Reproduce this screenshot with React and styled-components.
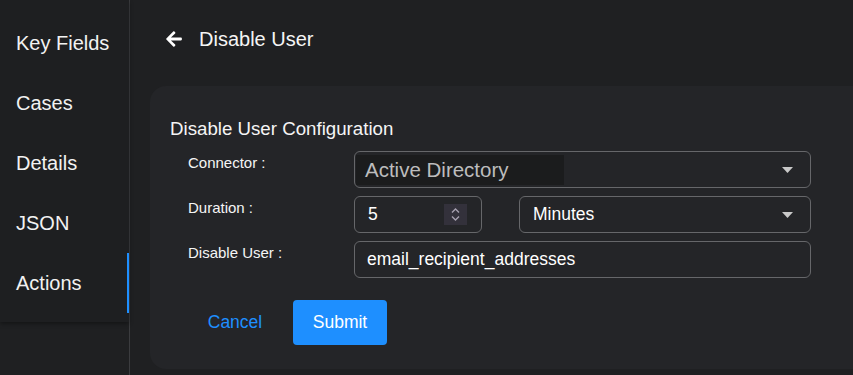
import React from 'react';
import styled, { createGlobalStyle } from 'styled-components';

const GlobalStyle = createGlobalStyle`
  body {
    margin: 0;
    background: #1f2022;
    font-family: "Liberation Sans", Arial, sans-serif;
    color: #ffffff;
  }
`;

const Page = styled.div`
  display: flex;
  height: 375px;
  overflow: hidden;
`;

const SideColumn = styled.aside`
  width: 129px;
  flex-shrink: 0;
  border-right: 1px solid #3b3c3f;
`;

const SidePanel = styled.nav`
  background: #1e1f21;
  padding: 13px 0 9px;
  box-shadow: 0 2px 4px rgba(0, 0, 0, 0.35);
`;

const NavItem = styled.div`
  height: 60px;
  display: flex;
  align-items: center;
  padding-left: 16px;
  font-size: 20px;
  color: #f2f2f2;
  box-shadow: ${(p) => (p.$active ? 'inset -2px 0 0 #1e8fff' : 'none')};
`;

const Main = styled.main`
  flex: 1;
  padding: 20px 0 6px 20px;
  display: flex;
  flex-direction: column;
  min-width: 0;
`;

const Header = styled.div`
  display: flex;
  align-items: center;
  height: 38px;
  padding-left: 16px;
  gap: 17px;
  font-size: 20px;
  color: #f5f5f5;
`;

const Card = styled.section`
  margin-top: 28px;
  margin-right: -30px;
  background: #242528;
  border-radius: 16px;
  padding: 32px 20px 24px;
`;

const CardTitle = styled.h2`
  margin: 0 0 11px;
  font-size: 18.7px;
  line-height: 22px;
  font-weight: 400;
  color: #f5f5f5;
`;

const Form = styled.div`
  display: grid;
  grid-template-columns: 184px 457px;
  row-gap: 8px;
`;

const Label = styled.div`
  padding: 3px 0 0 18px;
  font-size: 15px;
  line-height: 17px;
  color: #f5f5f5;
`;

const Field = styled.div`
  height: 37px;
  box-sizing: border-box;
  border: 1px solid #66676a;
  border-radius: 6px;
  display: flex;
  align-items: center;
  justify-content: ${(p) => (p.$spread ? 'space-between' : 'flex-start')};
  padding: ${(p) => p.$pad || '0 16px 0 12px'};
  font-size: 17.5px;
  color: #ffffff;
  width: ${(p) => p.$width || 'auto'};
`;

const Split = styled.div`
  display: flex;
  gap: 37px;
`;

const Grow = styled.div`
  flex: 1;
`;

const AutoBox = styled.div`
  height: 30px;
  width: 208px;
  background: #1b1c1d;
  display: flex;
  align-items: center;
  padding-left: 9px;
  box-sizing: border-box;
  font-size: 20.5px;
  color: #bdbdbd;
`;

const Spinner = styled.div`
  width: 23px;
  height: 21px;
  background: #33313b;
  display: flex;
  align-items: center;
  justify-content: center;
`;

const Actions = styled.div`
  display: flex;
  gap: 11px;
  margin-top: 22px;
  padding-left: 18px;
`;

const Button = styled.button`
  width: 94px;
  height: 45px;
  border: none;
  border-radius: 4px;
  font-family: inherit;
  font-size: 17.5px;
  cursor: pointer;
  background: ${(p) => (p.$primary ? '#1e8fff' : 'transparent')};
  color: ${(p) => (p.$primary ? '#ffffff' : '#1e8fff')};
`;

const Caret = () => (
  <svg width="11" height="6" viewBox="0 0 11 6">
    <path d="M0 0h11L5.5 6z" fill="#c9c9c9" />
  </svg>
);

const BackArrow = () => (
  <svg width="16" height="18" viewBox="0 0 448 512">
    <path
      fill="#ffffff"
      d="M257.5 445.1l-22.2 22.2c-9.4 9.4-24.6 9.4-33.9 0L7 273c-9.4-9.4-9.4-24.6 0-33.9L201.4 44.7c9.4-9.4 24.6-9.4 33.9 0l22.2 22.2c9.5 9.5 9.3 25-.4 34.3L136.6 216H424c13.3 0 24 10.7 24 24v32c0 13.3-10.7 24-24 24H136.6l120.5 114.8c9.8 9.3 10 24.8.4 34.3z"
    />
  </svg>
);

const SpinIcon = () => (
  <svg width="9" height="13" viewBox="0 0 9 13">
    <path d="M1 4.5L4.5 1 8 4.5M1 8.5L4.5 12 8 8.5" stroke="#a7a1b0" strokeWidth="1.4" fill="none" />
  </svg>
);

const navItems = ['Key Fields', 'Cases', 'Details', 'JSON', 'Actions'];

export default function App() {
  return (
    <>
      <GlobalStyle />
      <Page>
        <SideColumn>
          <SidePanel>
            {navItems.map((item) => (
              <NavItem key={item} $active={item === 'Actions'}>
                {item}
              </NavItem>
            ))}
          </SidePanel>
        </SideColumn>
        <Main>
          <Header>
            <BackArrow />
            <span>Disable User</span>
          </Header>
          <Card>
            <CardTitle>Disable User Configuration</CardTitle>
            <Form>
              <Label>Connector :</Label>
              <Field $spread $pad="0 17px 0 1px">
                <AutoBox>Active Directory</AutoBox>
                <Caret />
              </Field>
              <Label>Duration :</Label>
              <Split>
                <Field $spread $width="128px" $pad="0 14px 0 13px">
                  <span>5</span>
                  <Spinner>
                    <SpinIcon />
                  </Spinner>
                </Field>
                <Grow>
                  <Field $spread $pad="0 17px 0 13px">
                    <span>Minutes</span>
                    <Caret />
                  </Field>
                </Grow>
              </Split>
              <Label>Disable User :</Label>
              <Field>email_recipient_addresses</Field>
            </Form>
            <Actions>
              <Button>Cancel</Button>
              <Button $primary>Submit</Button>
            </Actions>
          </Card>
        </Main>
      </Page>
    </>
  );
}
